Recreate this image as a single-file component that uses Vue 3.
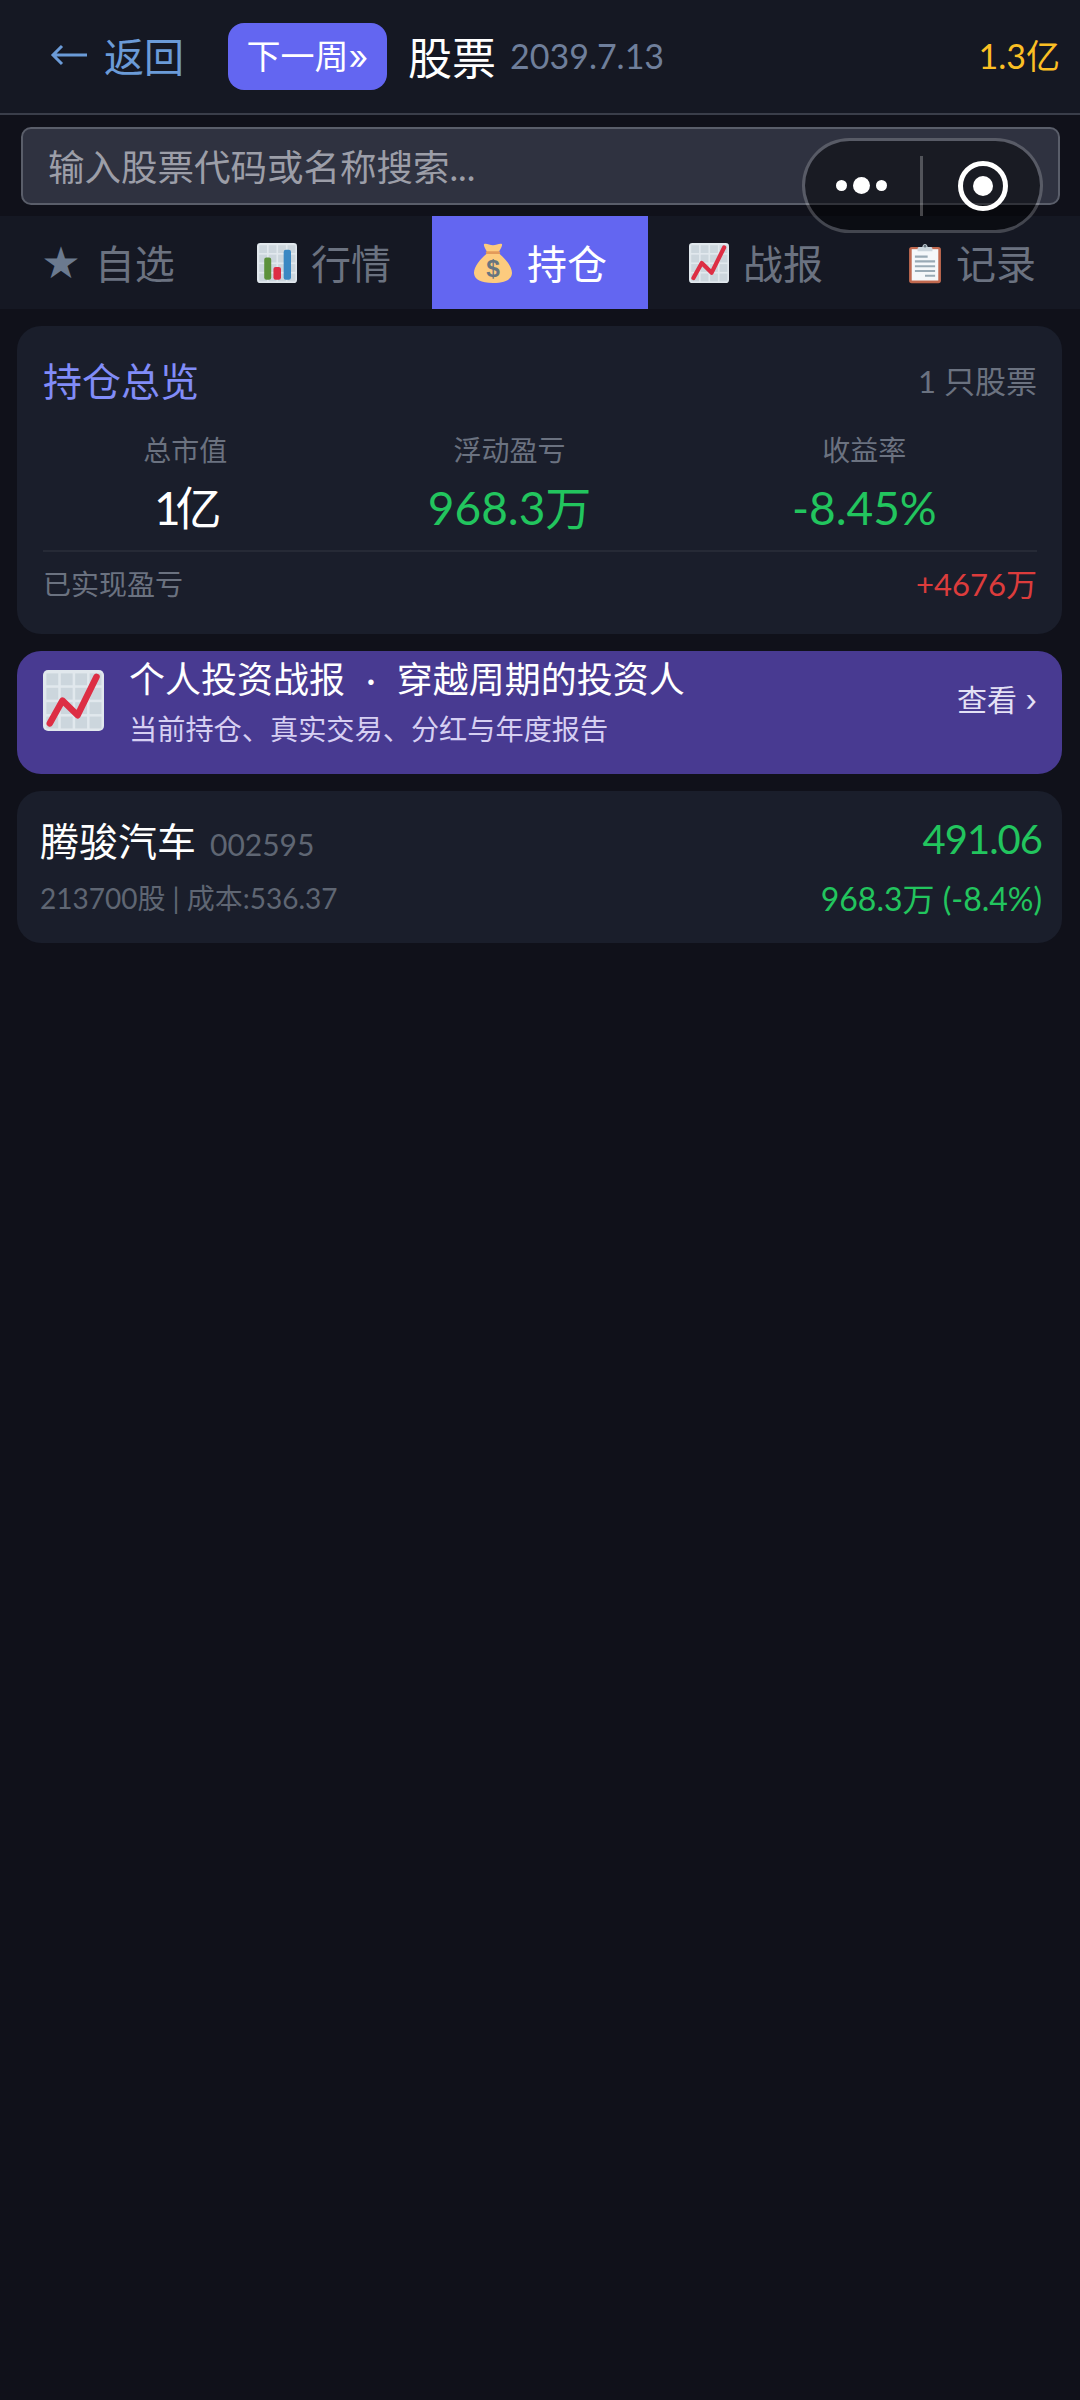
<template>
  <div class="page">
    <!-- 顶部栏 -->
    <div class="header">
      <div class="back">
        <svg class="arrow" viewBox="0 0 38 22">
          <path d="M37 11H3M12 2l-9 9 9 9" fill="none" stroke="#6b9bd8" stroke-width="3" />
        </svg>
        <span>返回</span>
      </div>
      <div class="next-btn">下一周»</div>
      <div class="title">股票</div>
      <div class="date">2039.7.13</div>
      <div class="money">1.3亿</div>
    </div>

    <!-- 搜索 -->
    <div class="search-wrap">
      <div class="search">输入股票代码或名称搜索...</div>
    </div>

    <!-- Tab -->
    <div class="tabs">
      <div class="tab" v-for="t in tabs" :key="t.name" :class="{ active: t.name === '持仓' }">
        <span v-if="t.icon === 'star'" class="star">★</span>
        <svg v-else-if="t.icon === 'bar'" class="tab-icon" viewBox="0 0 36 36">
          <rect x="0" y="0" width="36" height="36" rx="3" fill="#e1e8ed" />
          <rect v-for="c in gridCells" :key="c.k" :x="c.x" :y="c.y" width="7" height="7" fill="#ccd6dd" />
          <rect x="6.500" y="13" width="6.300" height="20" rx="2" fill="#5c913b" />
          <rect x="14.800" y="21.500" width="6.800" height="11.500" rx="2" fill="#dd2e44" />
          <rect x="24" y="6" width="6.600" height="27" rx="2" fill="#3b88c3" />
        </svg>
        <svg v-else-if="t.icon === 'bag'" class="tab-icon" viewBox="0 0 36 36">
          <path fill="#fdcb7e" d="M13 9C7 14 0 22 1 28c.7 5 6 8 17 8s16.300-3 17-8c1-6-6-14-12-19z" />
          <path fill="#fdcb7e" d="M10 1c2-1 5 1 8 1s6-2 8-1c1 1-2 6-3 7.500H13C12 7 9 2 10 1z" />
          <path fill="#e39a5a" d="M13 7.500h10c.8 0 1.500.6 1.500 1.200s-.7 1.300-1.500 1.300H13c-.8 0-1.500-.6-1.500-1.300s.7-1.200 1.500-1.200z" />
          <text x="18" y="31" text-anchor="middle" class="dollar">$</text>
        </svg>
        <svg v-else-if="t.icon === 'trend'" class="tab-icon" viewBox="0 0 36 36">
          <rect x="0" y="0" width="36" height="36" rx="3" fill="#e1e8ed" />
          <rect v-for="c in gridCells" :key="c.k" :x="c.x" :y="c.y" width="7" height="7" fill="#ccd6dd" />
          <path d="M4 31.500 L11.500 18 L20.400 26.700 L31.600 4" fill="none" stroke="#dd2e44" stroke-width="3.800" stroke-linecap="round" stroke-linejoin="round" />
        </svg>
        <svg v-else class="tab-icon clip" viewBox="0 0 32 38">
          <rect x="1" y="4" width="30" height="34" rx="2.500" fill="#c1694f" />
          <rect x="3.500" y="6" width="25" height="29.500" fill="#f5f8fa" />
          <path d="M6.500 13h12M6.500 17.500h19M6.500 22h19M6.500 26.500h19M16 31h9.500" stroke="#99aab5" stroke-width="2" />
          <path d="M9 8V5.500c0-1 .8-1.500 1.500-1.500H13.500c.5-4 4.500-4 5 0H21.500c.7 0 1.500.5 1.500 1.500V8z" fill="#ccd6dd" />
          <circle cx="16" cy="3.200" r="1.300" fill="#66757f" />
        </svg>
        <span class="tab-name">{{ t.name }}</span>
      </div>
    </div>

    <div class="main">
      <!-- 持仓总览 -->
      <div class="card overview">
        <div class="ov-head">
          <span class="ov-title">持仓总览</span>
          <span class="ov-count">1 只股票</span>
        </div>
        <div class="stats">
          <div class="stat" v-for="s in stats" :key="s.label">
            <div class="stat-label">{{ s.label }}</div>
            <div class="stat-value" :class="s.cls">{{ s.value }}</div>
          </div>
        </div>
        <div class="realized">
          <span class="realized-label">已实现盈亏</span>
          <span class="realized-value">+4676万</span>
        </div>
      </div>

      <!-- 战报入口 -->
      <div class="banner">
        <svg class="banner-icon" viewBox="0 0 36 36">
          <rect x="0" y="0" width="36" height="36" rx="3" fill="#e1e8ed" />
          <rect v-for="c in gridCells" :key="c.k" :x="c.x" :y="c.y" width="7" height="7" fill="#ccd6dd" />
          <path d="M4 31.500 L11.500 18 L20.400 26.700 L31.600 4" fill="none" stroke="#dd2e44" stroke-width="3.800" stroke-linecap="round" stroke-linejoin="round" />
        </svg>
        <div class="banner-text">
          <div class="banner-title">个人投资战报 · 穿越周期的投资人</div>
          <div class="banner-sub">当前持仓、真实交易、分红与年度报告</div>
        </div>
        <div class="banner-link">查看 ›</div>
      </div>

      <!-- 持仓列表 -->
      <div class="card stock">
        <div class="stock-row">
          <div><span class="stock-name">腾骏汽车</span><span class="stock-code">002595</span></div>
          <div class="stock-price">491.06</div>
        </div>
        <div class="stock-row second">
          <div class="stock-sub">213700股 | 成本:536.37</div>
          <div class="stock-pl">968.3万 (-8.4%)</div>
        </div>
      </div>
    </div>

    <!-- 小程序胶囊 -->
    <div class="capsule">
      <div class="dots"><i></i><i class="big"></i><i></i></div>
      <div class="cap-line"></div>
      <div class="cap-close"><i></i></div>
    </div>
  </div>
</template>

<script setup>
const tabs = [
  { name: '自选', icon: 'star' },
  { name: '行情', icon: 'bar' },
  { name: '持仓', icon: 'bag' },
  { name: '战报', icon: 'trend' },
  { name: '记录', icon: 'clip' }
]

const stats = [
  { label: '总市值', value: '1亿', cls: 'white' },
  { label: '浮动盈亏', value: '968.3万', cls: 'green' },
  { label: '收益率', value: '-8.45%', cls: 'green' }
]

// 图表 emoji 的底纹格子
const gridCells = []
for (let r = 0; r < 4; r++) {
  for (let c = 0; c < 4; c++) {
    gridCells.push({ k: r + '-' + c, x: 2 + c * 8.5, y: 2 + r * 8.5 })
  }
}
</script>

<style>
html, body {
  background: #10111a;
}
</style>

<style scoped>
.page {
  position: relative;
  width: 1080px;
  height: 2400px;
  background: #10111a;
  overflow: hidden;
  font-family: "Lato", "Noto Sans CJK SC", sans-serif;
  font-weight: 400;
}
.header {
  display: flex;
  align-items: center;
  height: 113px;
  padding: 0 20px 0 50px;
  background: #151823;
  border-bottom: 2px solid #3a3e4a;
}
.back {
  display: flex;
  align-items: center;
  gap: 16px;
  width: 178px;
  margin-bottom: 4px;
  font-size: 40px;
  color: #6b9bd8;
}
.arrow {
  width: 38px;
  height: 22px;
}
.next-btn {
  width: 159px;
  height: 67px;
  border-radius: 16px;
  background: #6366f1;
  color: #fff;
  font-family: "Inter", "Noto Sans CJK SC", sans-serif;
  font-size: 34px;
  line-height: 67px;
  text-align: center;
}
.title {
  margin-left: 21px;
  margin-bottom: 2px;
  font-size: 44px;
  color: #fff;
}
.date {
  margin-left: 14px;
  margin-bottom: 2px;
  font-size: 34px;
  color: #6f7f9b;
}
.money {
  margin-left: auto;
  margin-bottom: 4px;
  font-size: 34px;
  color: #fbbf24;
}
.search-wrap {
  padding: 12px 20px 11px 21px;
}
.search {
  height: 74px;
  line-height: 76px;
  padding-left: 25px;
  background: #2f3240;
  border: 2px solid #5a5e6a;
  border-radius: 10px;
  font-size: 36.500px;
  color: #9c9ea8;
}
.tabs {
  display: flex;
  height: 93px;
  background: #151823;
}
.tab {
  flex: 1;
  display: flex;
  align-items: center;
  justify-content: center;
  gap: 14px;
  font-size: 40px;
  color: #6b7280;
}
.tab.active {
  background: #6366f1;
  color: #fff;
}
.tab-name {
  margin-bottom: 2px;
}
.star {
  font-family: "DejaVu Sans", sans-serif;
  font-size: 44px;
  line-height: 50px;
  color: #6b7a8f;
}
.tab-icon {
  width: 40px;
  height: 40px;
}
.tab-icon.clip {
  width: 34px;
  height: 42px;
}
.dollar {
  font-family: "Liberation Sans", sans-serif;
  font-size: 22px;
  font-weight: 700;
  fill: #67757f;
}
.main {
  display: flex;
  flex-direction: column;
  gap: 17px;
  padding: 17px 18px 0 17px;
}
.card {
  background: #1a1e2b;
  border-radius: 24px;
}
.overview {
  height: 308px;
  padding: 0 25px 0 26px;
}
.ov-head {
  display: flex;
  justify-content: space-between;
  align-items: center;
  height: 48px;
  padding-top: 29px;
  margin-bottom: 2px;
}
.ov-title {
  font-size: 39px;
  color: #818cf8;
}
.ov-count {
  font-size: 31px;
  color: #6b7280;
}
.stats {
  display: flex;
  justify-content: space-around;
  height: 147px;
  padding-top: 25px;
  border-bottom: 2px solid #262a36;
  box-sizing: border-box;
}
.stat {
  text-align: center;
}
.stat-label {
  font-size: 28px;
  line-height: 40px;
  color: #6b7280;
}
.stat-value {
  margin-top: 8px;
  font-size: 46px;
  line-height: 60px;
}
.white {
  color: #fff;
  letter-spacing: -5px;
}
.green {
  color: #22c55e;
}
.realized {
  display: flex;
  justify-content: space-between;
  align-items: center;
  padding-top: 12px;
  line-height: 40px;
}
.realized-label {
  font-size: 28px;
  color: #6b7280;
}
.realized-value {
  font-size: 31px;
  color: #dc3c3c;
}
.banner {
  display: flex;
  align-items: flex-start;
  height: 123px;
  padding: 0 25px 0 26px;
  border-radius: 24px;
  background: #483a91;
}
.banner-icon {
  width: 61px;
  height: 61px;
  margin-top: 19px;
}
.banner-text {
  flex: 1;
  margin-left: 25px;
}
.banner-title {
  font-size: 36px;
  color: #fff;
  word-spacing: 12px;
}
.banner-sub {
  margin-top: 4px;
  font-size: 28.200px;
  color: #d6cff2;
}
.banner-link {
  margin-top: 25px;
  font-family: "Inter", "Noto Sans CJK SC", sans-serif;
  font-size: 30px;
  color: #e4e1f5;
}
.stock {
  height: 152px;
  padding: 20px 20px 0 23px;
  box-sizing: border-box;
}
.stock-row {
  display: flex;
  justify-content: space-between;
  align-items: center;
}
.stock-row.second {
  margin-top: 7px;
}
.stock-name {
  font-size: 39px;
  color: #fff;
}
.stock-code {
  margin-left: 14px;
  font-size: 30px;
  color: #5f6673;
}
.stock-price {
  font-size: 40px;
  letter-spacing: -1px;
  color: #22c55e;
}
.stock-sub {
  font-size: 28px;
  color: #5f6673;
}
.stock-pl {
  font-size: 32px;
  color: #22c55e;
}
.capsule {
  position: absolute;
  left: 802px;
  top: 138px;
  width: 241px;
  height: 95px;
  box-sizing: border-box;
  display: flex;
  align-items: center;
  border: 3px solid rgba(255, 255, 255, 0.2);
  border-radius: 48px;
  background: rgba(0, 0, 0, 0.45);
  background-clip: padding-box;
}
.dots {
  display: flex;
  align-items: center;
  gap: 6px;
  margin-left: 31px;
}
.dots i {
  width: 11px;
  height: 11px;
  border-radius: 50%;
  background: #fff;
}
.dots i.big {
  width: 17px;
  height: 17px;
}
.cap-line {
  width: 3px;
  height: 60px;
  margin-left: 33px;
  background: rgba(255, 255, 255, 0.25);
}
.cap-close {
  display: flex;
  align-items: center;
  justify-content: center;
  width: 50px;
  height: 50px;
  margin-left: 35px;
  box-sizing: border-box;
  border: 5px solid #fff;
  border-radius: 50%;
}
.cap-close i {
  width: 20px;
  height: 20px;
  border-radius: 50%;
  background: #fff;
}
</style>
